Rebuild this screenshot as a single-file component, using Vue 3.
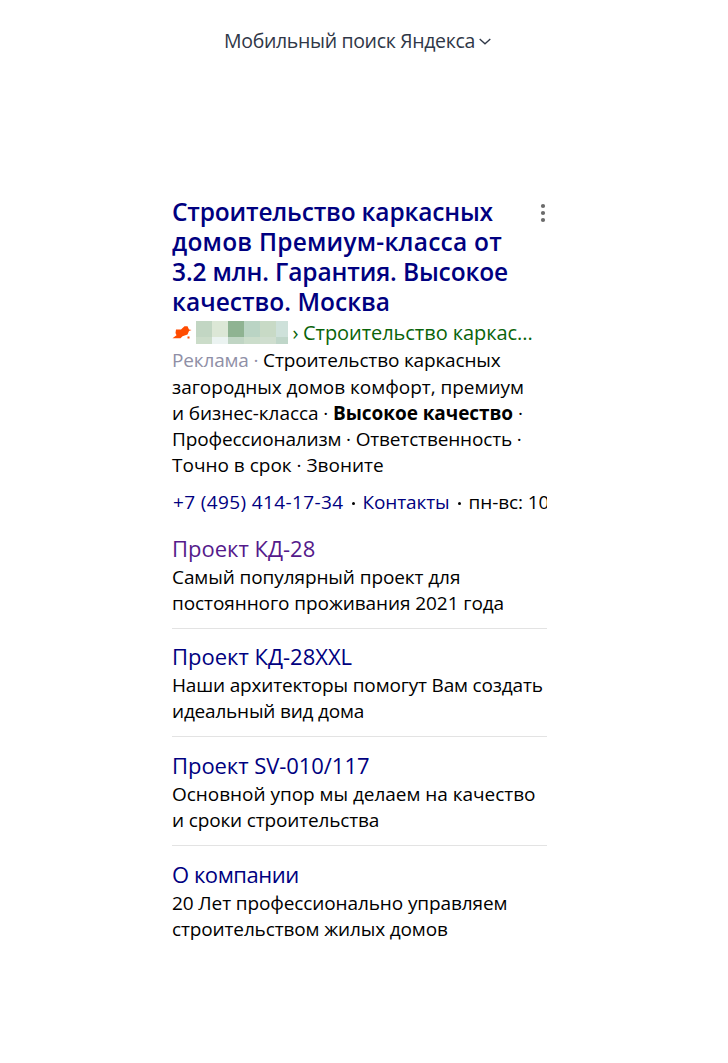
<script setup>
// every line carries its own tracking, in px
const titleLines = [
  { text: 'Строительство каркасных', gap: -0.17 },
  { text: 'домов Премиум-класса от', gap: 0.23 },
  { text: '3.2 млн. Гарантия. Высокое', gap: -0.13 },
  { text: 'качество. Москва', gap: 0.02 },
]

const mosaic = [
  '#c2d6c3', '#dce7d6', '#8fb392', '#bad4c4', '#c8dac6', '#cee1da',
  '#cbdcc9', '#ebf3f1', '#c0d5c4', '#cbddcb', '#cfdecf', '#bfd6c9',
]

const sitelinks = [
  {
    title: 'Проект КД-28',
    visited: true,
    lines: [
      { text: 'Самый популярный проект для', gap: -0.09 },
      { text: 'постоянного проживания 2021 года', gap: -0.08 },
    ],
  },
  {
    title: 'Проект КД-28XXL',
    lines: [
      { text: 'Наши архитекторы помогут Вам создать', gap: -0.17 },
      { text: 'идеальный вид дома', gap: -0.2 },
    ],
  },
  {
    title: 'Проект SV-010/117',
    gap: -0.05,
    lines: [
      { text: 'Основной упор мы делаем на качество', gap: -0.03 },
      { text: 'и сроки строительства', gap: -0.15 },
    ],
  },
  {
    title: 'О компании',
    gap: -0.45,
    lines: [
      { text: '20 Лет профессионально управляем', gap: -0.11 },
      { text: 'строительством жилых домов', gap: -0.13 },
    ],
  },
]

function tracking(item) {
  return { letterSpacing: (item.gap || 0) + 'px' }
}
</script>

<template>
  <div class="page">
    <header class="switcher">
      <span>Мобильный поиск Яндекса</span>
      <svg class="chevron" width="12" height="7" viewBox="0 0 12 7">
        <path d="M0.7 0.9 L6 5.8 L11.3 0.9" fill="none" stroke="#2f3747" stroke-width="1.3" />
      </svg>
    </header>

    <main class="ad">
      <div class="head">
        <a class="title">
          <span v-for="line in titleLines" :key="line.text" class="line" :style="tracking(line)">{{ line.text }}</span>
        </a>
        <svg class="dots" width="6" height="20" viewBox="0 0 6 20">
          <circle cx="3" cy="3" r="2.1" />
          <circle cx="3" cy="10" r="2.1" />
          <circle cx="3" cy="17" r="2.1" />
        </svg>
      </div>

      <div class="path">
        <svg class="favicon" width="20" height="15" viewBox="0 0 20 15">
          <path d="M0.5 13.2 L4.5 10.3 L3.5 8 L4 4.4 L9 4.6 L12.5 1.2 H15.5 L17 4.4 L19.5 5 L17 6 L15.5 9.5 L10.5 11.3 L8.5 13.2 Z" />
          <rect x="15.5" y="11.5" width="2" height="2" />
        </svg>
        <span class="mosaic">
          <i v-for="(color, i) in mosaic" :key="i" :style="{ background: color }"></i>
        </span>
        <span class="arrow">›</span>
        <span class="crumb">Строительство каркас...</span>
      </div>

      <div class="text">
        <span class="line l1"><span class="label">Реклама ·</span> Строительство каркасных</span>
        <span class="line l2">загородных домов комфорт, премиум</span>
        <span class="line l3">и бизнес-класса · <b>Высокое качество</b> ·</span>
        <span class="line l4">Профессионализм · Ответственность ·</span>
        <span class="line l5">Точно в срок · Звоните</span>
      </div>

      <div class="meta">
        <a class="phone">+7 (495) 414-17-34</a>
        <i class="dot"></i>
        <a>Контакты</a>
        <i class="dot"></i>
        <span>пн-вс: 10</span>
      </div>

      <ul class="sitelinks">
        <li v-for="link in sitelinks" :key="link.title">
          <a class="name" :class="{ visited: link.visited }" :style="tracking(link)">{{ link.title }}</a>
          <span v-for="line in link.lines" :key="line.text" class="line" :style="tracking(line)">{{ line.text }}</span>
        </li>
      </ul>
    </main>
  </div>
</template>

<style>
body {
  margin: 0;
  background: #fff;
}
</style>

<style scoped>
.page {
  height: 1063px;
  overflow: hidden;
  font-family: "Open Sans", "Noto Sans", sans-serif;
  font-size: 19px;
  color: #000;
}

.switcher {
  display: flex;
  justify-content: center;
  align-items: center;
  gap: 4px;
  height: 30px;
  margin-top: 25px;
  padding-right: 13px;
  font-size: 19.5px;
  letter-spacing: -0.33px;
  color: #2f3747;
}

.chevron {
  margin-top: 3px;
}

.ad {
  width: 375px;
  margin: 141px 0 0 172px;
}

.line {
  display: block;
  white-space: nowrap;
}

.head {
  display: flex;
  justify-content: space-between;
  height: 120px;
}

.title {
  padding-top: 1px;
  font-size: 24.5px;
  font-weight: 600;
  line-height: 30px;
  color: #000080;
}

.dots {
  margin-top: 7px;
  margin-right: 1px;
  fill: #6b6b6b;
}

.path {
  display: flex;
  align-items: center;
  box-sizing: border-box;
  height: 31px;
  padding-top: 2px;
  font-size: 20px;
  color: #0a640a;
}

.favicon {
  fill: #ff4b00;
}

.mosaic {
  display: grid;
  grid-template-columns: repeat(5, 16px) 12px;
  grid-template-rows: 16px 7px;
  margin-left: 4px;
}

.arrow {
  width: 15px;
  text-align: center;
}

.crumb {
  white-space: nowrap;
  letter-spacing: -0.06px;
}

.text {
  line-height: 26.2px;
}

.l1 {
  padding-bottom: 0.5px;
  letter-spacing: -0.16px;
}

.l2 {
  letter-spacing: -0.02px;
}

.l3 {
  letter-spacing: -0.07px;
}

.l4 {
  letter-spacing: -0.15px;
}

.l5 {
  letter-spacing: 0;
}

.label {
  color: #8f8fa6;
}

.meta {
  display: flex;
  align-items: center;
  height: 26px;
  margin-top: 10px;
  padding-left: 1px;
  overflow: hidden;
  white-space: nowrap;
  letter-spacing: -0.1px;
}

.meta a {
  color: #000080;
}

.meta .phone {
  letter-spacing: 0.38px;
}

.dot {
  flex: none;
  width: 3px;
  height: 3px;
  margin: 3px 8px 0;
  border-radius: 50%;
  background: #000;
}

.sitelinks {
  margin: 20.3px 0 0;
  padding: 0;
  list-style: none;
}

.sitelinks li {
  height: 93px;
  margin-bottom: 14.6px;
  border-bottom: 1px solid #e3e3e3;
  line-height: 26px;
}

.sitelinks li:last-child {
  border: 0;
}

.name {
  display: block;
  padding-bottom: 2px;
  line-height: 27px;
  font-size: 22px;
  color: #000080;
}

.name.visited {
  color: #551a8b;
}
</style>
